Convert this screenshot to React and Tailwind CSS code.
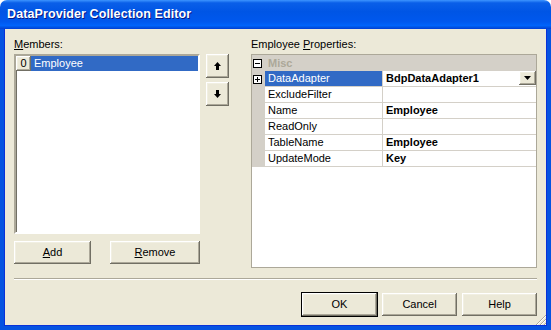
import React from "react";

const raised =
  "bg-[#ece9d8] shadow-[inset_-1px_-1px_#716f64,inset_1px_1px_#ffffff,inset_-2px_-2px_#aca899,inset_2px_2px_#f1efe2]";

function Button({ children, className = "", isDefault = false }) {
  return (
    <div
      className={`flex items-center justify-center text-[11px] text-black ${raised} ${
        isDefault ? "outline outline-1 outline-black -outline-offset-0" : ""
      } ${className}`}
    >
      {children}
    </div>
  );
}

function Arrow({ up }) {
  return (
    <svg width="7" height="8" viewBox="0 0 7 8" className={up ? "" : "rotate-180"}>
      <path d="M3.5 0 L7 4 L5 4 L5 8 L2 8 L2 4 L0 4 Z" fill="#000" />
    </svg>
  );
}

function Box({ plus }) {
  return (
    <div className="w-[9px] h-[9px] border border-black bg-white relative">
      <div className="absolute left-[1px] top-[3px] w-[5px] h-[1px] bg-black" />
      {plus && <div className="absolute left-[3px] top-[1px] w-[1px] h-[5px] bg-black" />}
    </div>
  );
}

const props = [
  { name: "DataAdapter", value: "BdpDataAdapter1", selected: true, expand: true, drop: true },
  { name: "ExcludeFilter", value: "" },
  { name: "Name", value: "Employee" },
  { name: "ReadOnly", value: "" },
  { name: "TableName", value: "Employee" },
  { name: "UpdateMode", value: "Key" },
];

export default function App() {
  return (
    <div
      className="w-[551px] h-[330px] flex flex-col bg-white"
      style={{ fontFamily: '"Liberation Sans", Arial, sans-serif' }}
    >
      {/* Title bar */}
      <div className="h-[29px] shrink-0 rounded-t-[7px] flex items-center pl-[7px] bg-[linear-gradient(180deg,#3d95ff_0%,#0a5fe8_10%,#0055e5_40%,#0058ee_75%,#0064fb_88%,#0050e0_95%,#003dd7_100%)]">
        <span className="text-white font-bold text-[12.5px] tracking-[0.1px] [text-shadow:1px_1px_#0a1883]">
          DataProvider Collection Editor
        </span>
      </div>

      {/* Client area */}
      <div className="flex-1 relative bg-[#ece9d8] border-l-4 border-r-4 border-b-4 border-[#0553e1] shadow-[inset_1px_0_#0831d9,inset_-1px_0_#0831d9,inset_0_-1px_#0831d9] flex flex-col px-[10px]">
        <div className="flex pt-[9px]">
          {/* Members column */}
          <div className="w-[186px] flex flex-col">
            <div className="h-[13px] leading-[13px] text-[11px] text-black">
              <u>M</u>embers:
            </div>
            <div className="mt-[3px] h-[180px] bg-white border-2 border-t-[#aca899] border-l-[#aca899] border-b-white border-r-white shadow-[inset_1px_1px_#716f64]">
              <div className="flex h-[15px] bg-[#316ac5] items-center">
                <div className={`w-[15px] h-[15px] flex items-center justify-center text-[11px] ${raised}`}>0</div>
                <span className="ml-[3px] text-[11px] text-white">Employee</span>
              </div>
            </div>
            <div className="flex justify-between mt-[7px]">
              <Button className="w-[77px] h-[23px]">
                <u>A</u>dd
              </Button>
              <Button className="w-[90px] h-[23px]">
                <u>R</u>emove
              </Button>
            </div>
          </div>

          {/* Up / down */}
          <div className="ml-[6px] pt-[16px] flex flex-col gap-[4px]">
            <Button className="w-[23px] h-[24px]">
              <Arrow up />
            </Button>
            <Button className="w-[23px] h-[24px]">
              <Arrow />
            </Button>
          </div>

          {/* Properties */}
          <div className="ml-[22px] flex-1 flex flex-col">
            <div className="h-[13px] leading-[13px] text-[11px] text-black">
              Employee <u>P</u>roperties:
            </div>
            <div className="mt-[3px] h-[214px] bg-white border border-[#aca899] flex flex-col">
              <div className="h-[16px] bg-[#d4d0c8] flex items-center">
                <div className="w-[13px] pl-[1px]">
                  <Box />
                </div>
                <span className="ml-[3px] text-[11px] font-bold text-[#aca899]">Misc</span>
              </div>
              {props.map((p) => (
                <div key={p.name} className="h-[16px] flex">
                  <div className="w-[13px] bg-[#d4d0c8] flex items-center pl-[1px]">
                    {p.expand && <Box plus />}
                  </div>
                  <div
                    className={`w-[118px] border-b border-r border-[#d4d0c8] pl-[3px] text-[11px] leading-[15px] ${
                      p.selected ? "bg-[#316ac5] text-white" : "text-black"
                    }`}
                  >
                    {p.name}
                  </div>
                  <div className="flex-1 border-b border-[#d4d0c8] pl-[3px] text-[11px] font-bold leading-[15px] text-black flex justify-between">
                    <span>{p.value}</span>
                    {p.drop && (
                      <div className={`w-[17px] h-[14px] flex items-center justify-center ${raised}`}>
                        <svg width="7" height="4" viewBox="0 0 7 4">
                          <path d="M0 0 H7 L3.5 4 Z" fill="#000" />
                        </svg>
                      </div>
                    )}
                  </div>
                </div>
              ))}
            </div>
          </div>
        </div>

        {/* Separator */}
        <div className="mt-[10px] h-[2px] border-t border-[#aca899] border-b border-b-white" />

        {/* Dialog buttons */}
        <div className="mt-[13px] flex justify-end gap-[5px]">
          <Button className="w-[75px] h-[23px]" isDefault>
            OK
          </Button>
          <Button className="w-[75px] h-[23px]">Cancel</Button>
          <Button className="w-[75px] h-[23px]">Help</Button>
        </div>

        {/* Size grip */}
        <svg width="12" height="12" viewBox="0 0 12 12" className="absolute right-0 bottom-0">
          <path d="M11 1 L1 11 M11 5 L5 11 M11 9 L9 11" stroke="#aca899" strokeWidth="1" />
          <path d="M11 2 L2 11 M11 6 L6 11 M11 10 L10 11" stroke="#ffffff" strokeWidth="1" />
        </svg>
      </div>
    </div>
  );
}
